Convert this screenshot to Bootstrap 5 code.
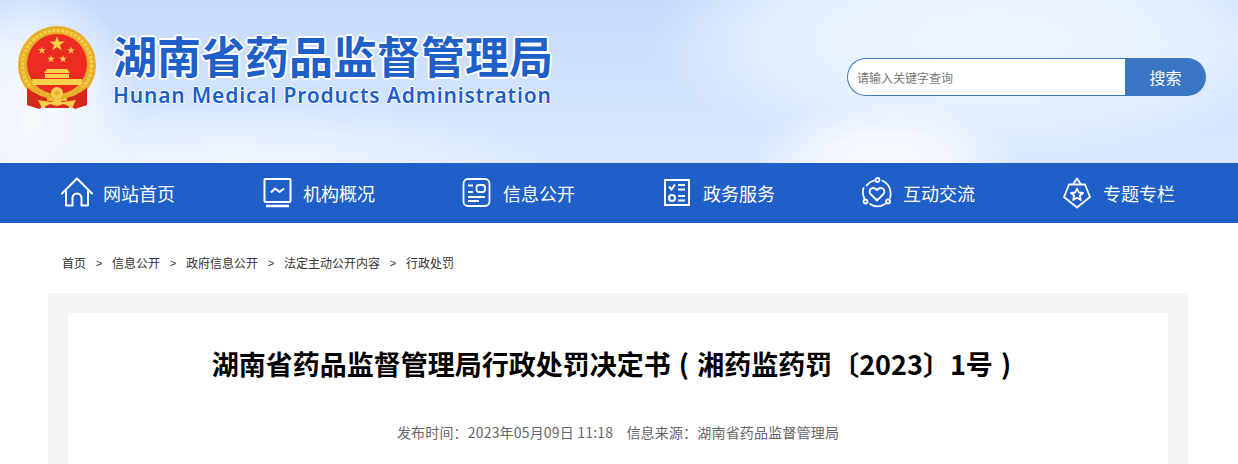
<!DOCTYPE html>
<html lang="zh-CN">
<head>
    <meta charset="UTF-8">
    <title>湖南省药品监督管理局行政处罚决定书</title>
    <link rel="stylesheet" href="https://cdn.jsdelivr.net/npm/bootstrap@5.3.3/dist/css/bootstrap.min.css">
    <script src="https://cdn.jsdelivr.net/npm/bootstrap@5.3.3/dist/js/bootstrap.bundle.min.js"></script>
    <style>
    body {
        font-family: "Noto Sans CJK SC", "Liberation Sans", sans-serif;
        background: #fff;
    }
    .site-head {
        height: 163px;
        padding: 24px 32px 0 17px;
        background:
            radial-gradient(ellipse 130px 60px at 885px 160px, #f7faff 0%, #f4f8ff 45%, rgba(244,248,255,0) 100%),
            radial-gradient(ellipse 110px 140px at 30px 120px, #f6faff 0%, #eff5fe 50%, rgba(239,245,254,0) 100%),
            radial-gradient(ellipse 330px 70px at 230px 170px, #f4f8ff 0%, rgba(244,248,255,0) 100%),
            radial-gradient(ellipse 340px 120px at 990px 40px, #eef4fe 0%, #e6f0fe 60%, rgba(230,240,254,0) 100%),
            linear-gradient(180deg, #c6dbfa 0%, #d9e8fd 100%);
    }
    .emblem { width: 80px; height: 88px; flex: none; }
    .logo-words { margin-left: 16px; margin-top: 3px; color: #1f5fc8; }
    .logo-cn {
        font-size: 44px;
        line-height: 56px;
        font-weight: 700;
        white-space: nowrap;
        text-shadow: 2px 0 0 #fff, -2px 0 0 #fff, 0 2px 0 #fff, 0 -2px 0 #fff, 1px 1px 1px #fff, -1px -1px 1px #fff, 1px -1px 1px #fff, -1px 1px 1px #fff;
    }
    .logo-en {
        font-family: "Noto Sans", "Liberation Sans", sans-serif;
        font-size: 21px;
        line-height: 25px;
        font-weight: 600;
        letter-spacing: .82px;
        white-space: nowrap;
        text-shadow: 1px 0 0 #fff, -1px 0 0 #fff, 0 1px 0 #fff, 0 -1px 0 #fff;
    }
    .search-box { width: 359px; height: 38px; margin-top: 34px; }
    .search-box .form-control {
        height: 38px;
        font-size: 12px;
        padding: 0 9px;
        border: 1px solid #3a76c4;
        border-right: 0;
        border-radius: 19px 0 0 19px;
    }
    .search-box .form-control::placeholder { color: #777; }
    .search-box .btn {
        width: 81px;
        height: 38px;
        font-size: 16px;
        color: #fff;
        background: #3a76c4;
        border: 0;
        border-radius: 0 19px 19px 0;
    }
    .main-nav { height: 60px; background: #1f5fc8; }
    .main-nav-inner { width: 1200px; }
    .main-nav a {
        width: 200px;
        height: 60px;
        padding-right: 2px;
        gap: 10px;
        color: #fff;
        font-size: 18px;
        text-decoration: none;
    }
    .main-nav svg { width: 32px; height: 32px; flex: none; }
    .crumbs {
        height: 70px;
        padding: 10px 0 0 62px;
        font-size: 12px;
        color: #333;
    }
    .crumbs i { font-style: normal; font-family: "Liberation Sans", sans-serif; width: 26px; text-align: center; font-size: 11px; }
    .article-wrap {
        width: 1140px;
        margin-left: 48px;
        padding: 20px 20px 0;
        background: #f4f4f4;
    }
    .article-body { height: 151px; padding-top: 31px; background: #fff; }
    .article-title {
        font-size: 27px;
        line-height: 40px;
        font-weight: 700;
        word-spacing: 2px;
        padding-right: 5px;
        color: #000;
        margin: 0;
    }
    .article-meta {
        margin-top: 38px;
        font-size: 14px;
        line-height: 20px;
        letter-spacing: .18px;
        color: #666;
    }
    </style>
</head>
<body>
    <div class="site-head d-flex align-items-start justify-content-between">
        <div class="d-flex">
            <svg class="emblem" viewBox="0 0 80 88">
                <defs>
                    <path id="five-star" d="M0 -1 L.225 -.309 L.951 -.309 L.363 .118 L.588 .809 L0 .382 L-.588 .809 L-.363 .118 L-.951 -.309 L-.225 -.309 Z"/>
                </defs>
                <circle cx="40" cy="41" r="39" fill="#e8b02a"/>
                <circle cx="40" cy="41" r="34.500" fill="none" stroke="#f5cf4e" stroke-width="3" stroke-dasharray="3 1.500"/>
                <circle cx="40" cy="40" r="30" fill="#ec2c22"/>
                <use href="#five-star" transform="translate(40 20) scale(8)" fill="#f8d24a"/>
                <use href="#five-star" transform="translate(25 26.500) scale(4)" fill="#f8d24a"/>
                <use href="#five-star" transform="translate(54 26.500) scale(4)" fill="#f8d24a"/>
                <use href="#five-star" transform="translate(34 35) scale(4)" fill="#f8d24a"/>
                <use href="#five-star" transform="translate(46 35) scale(4)" fill="#f8d24a"/>
                <path d="M30 45 H50 L53 49 H27 Z M28 50 H52 V54 H28 Z M15 55 H65 L64 61 H16 Z" fill="#f8d24a"/>
                <path d="M10 62 L24 70 L30 73 L30 80 L22 85 L10 81 Z" fill="#d8281e"/>
                <path d="M70 62 L56 70 L50 73 L50 80 L58 85 L70 81 Z" fill="#d8281e"/>
                <path d="M26 77 H54 L52 84 H28 Z" fill="#e02a20"/>
                <path d="M10 61 Q25 72 40 71 Q55 72 70 61 L71 63 Q55 76 40 75 Q25 76 9 63 Z" fill="#e8b02a"/>
                <circle cx="40" cy="69" r="6" fill="#f5cf4e"/>
                <circle cx="40" cy="69" r="2.500" fill="#e8b02a"/>
                <path d="M21 76 L34 78 L40 76 L46 78 L59 76 L55 84 L47 80 L40 82 L33 80 L25 84 Z" fill="#f5cf4e"/>
            </svg>
            <div class="logo-words">
                <div class="logo-cn">湖南省药品监督管理局</div>
                <div class="logo-en">Hunan Medical Products Administration</div>
            </div>
        </div>
        <div class="search-box input-group flex-nowrap">
            <input class="form-control" type="text" placeholder="请输入关键字查询">
            <button class="btn" type="button">搜索</button>
        </div>
    </div>

    <nav class="main-nav d-flex justify-content-center">
        <div class="main-nav-inner d-flex">
            <a class="d-flex align-items-center justify-content-center" href="#">
                <svg viewBox="0 0 32 32" fill="none" stroke="#fff" stroke-width="2" stroke-linejoin="round" stroke-linecap="round">
                    <path d="M1 16.500 L16 1.500 L31 16.500"/>
                    <path d="M5 14 V28.500 H11.500 V21 A4.500 4.500 0 0 1 20.500 21 V28.500 H27 V14"/>
                </svg>
                <span>网站首页</span>
            </a>
            <a class="d-flex align-items-center justify-content-center" href="#">
                <svg viewBox="0 0 32 32" fill="none" stroke="#fff" stroke-width="2" stroke-linejoin="round">
                    <rect x="3.500" y="2" width="26" height="23" rx="1"/>
                    <path d="M10 15.500 L14 11.500 L18.500 15 L23 11.500"/>
                    <path d="M5 29 H28" stroke-width="2.500"/>
                </svg>
                <span>机构概况</span>
            </a>
            <a class="d-flex align-items-center justify-content-center" href="#">
                <svg viewBox="0 0 32 32" fill="none" stroke="#fff" stroke-width="1.800">
                    <rect x="2.500" y="2" width="26" height="27" rx="4.500"/>
                    <path d="M7 8.500 H12 M7 15 H12 M7 20 H24 M7 24 H18"/>
                    <rect x="15.500" y="8" width="8.500" height="7" rx="2.500"/>
                </svg>
                <span>信息公开</span>
            </a>
            <a class="d-flex align-items-center justify-content-center" href="#">
                <svg viewBox="0 0 32 32" fill="none" stroke="#fff" stroke-width="2">
                    <rect x="4" y="3" width="24" height="25"/>
                    <path d="M8 9.500 L10.500 12.500 L14 7.500"/>
                    <path d="M17 8 H24 M17 12.500 H24 M17 19 H24 M17 23.500 H24"/>
                    <circle cx="11" cy="21" r="3"/>
                </svg>
                <span>政务服务</span>
            </a>
            <a class="d-flex align-items-center justify-content-center" href="#">
                <svg viewBox="0 0 32 32" fill="none" stroke="#fff" stroke-width="1.800" stroke-linecap="round" stroke-linejoin="round">
                    <path d="M16 23.500 L9.500 17 C6.500 13 11.500 8.500 16 13 C20.500 8.500 25.500 13 22.500 17 Z"/>
                    <path d="M5.500 8.500 A14 14 0 0 1 13 3.500 M21.500 3.800 A14 14 0 0 1 29.500 15 A14 14 0 0 1 29 21 M24 27 A14 14 0 0 1 9 27 M3.200 21 A14 14 0 0 1 2.500 11"/>
                    <circle cx="16.500" cy="3" r="2"/>
                    <circle cx="4.500" cy="24.500" r="2"/>
                    <circle cx="27" cy="24.500" r="2"/>
                </svg>
                <span>互动交流</span>
            </a>
            <a class="d-flex align-items-center justify-content-center" href="#">
                <svg viewBox="0 0 32 32" fill="none" stroke="#fff" stroke-width="1.800" stroke-linejoin="round">
                    <path d="M12 7.500 L16 1.500 L20 7.500"/>
                    <path d="M8 7.500 H24 L29 20 L16 30.500 L3 20 Z"/>
                    <path d="M16 11.500 L17.800 15.500 L22 16 L18.800 18.800 L19.800 23 L16 20.800 L12.200 23 L13.200 18.800 L10 16 L14.200 15.500 Z"/>
                </svg>
                <span>专题专栏</span>
            </a>
        </div>
    </nav>

    <div class="crumbs d-flex align-items-center">
        <span>首页</span><i>&gt;</i><span>信息公开</span><i>&gt;</i><span>政府信息公开</span><i>&gt;</i><span>法定主动公开内容</span><i>&gt;</i><span>行政处罚</span>
    </div>

    <div class="article-wrap">
        <div class="article-body text-center">
            <h1 class="article-title">湖南省药品监督管理局行政处罚决定书 ( 湘药监药罚〔2023〕1号 )&nbsp;</h1>
            <div class="article-meta">发布时间：2023年05月09日 11:18 &nbsp;&nbsp; 信息来源：湖南省药品监督管理局</div>
        </div>
    </div>
</body>
</html>
